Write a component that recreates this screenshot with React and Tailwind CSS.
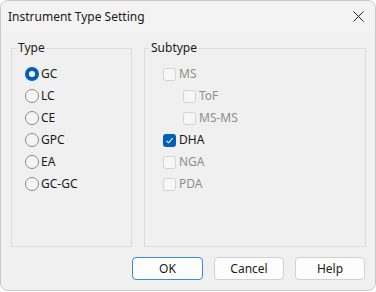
function Radio({ label, checked }) {
  return (
    <div className="flex items-center h-[22px] gap-[2px]">
      {checked ? (
        <span className="w-[14px] h-[14px] rounded-full bg-[#005fb8] flex items-center justify-center">
          <span className="w-[6px] h-[6px] rounded-full bg-white" />
        </span>
      ) : (
        <span className="w-[14px] h-[14px] rounded-full border border-[#8a8a8a] bg-[#f5f5f5]" />
      )}
      <span className="text-[12px] text-[#1a1a1a]">{label}</span>
    </div>
  );
}

function Check({ label, checked, disabled, indent }) {
  return (
    <div className={`flex items-center h-[22px] gap-[3px] ${indent ? "pl-[20px]" : ""}`}>
      {checked ? (
        <span className="w-[13px] h-[13px] rounded-[3px] bg-[#005fb8] flex items-center justify-center">
          <svg width="9" height="9" viewBox="0 0 9 9">
            <path d="M1.5 4.8 L3.6 6.8 L7.6 2.2" stroke="white" strokeWidth="1.1" fill="none" />
          </svg>
        </span>
      ) : (
        <span className="w-[13px] h-[13px] rounded-[3px] border border-[#d4d4d4] bg-[#f7f7f7]" />
      )}
      <span className={`text-[12px] ${disabled ? "text-[#8f8f8f]" : "text-[#1a1a1a]"}`}>{label}</span>
    </div>
  );
}

function Group({ title, className, children }) {
  return (
    <div className={`relative border border-[#dcdcdc] ${className}`}>
      <span className="absolute -top-[9px] left-[5px] bg-[#f0f0f0] px-[1px] text-[12px] leading-[16px] text-[#1a1a1a]">
        {title}
      </span>
      {children}
    </div>
  );
}

export default function App() {
  return (
    <div
      className="w-[376px] h-[292px] bg-white"
      style={{ fontFamily: '"Noto Sans", "Open Sans", sans-serif' }}
    >
      <div className="w-[376px] h-[291px] rounded-[8px] border border-[#c8c8c8] bg-[#f0f0f0] overflow-hidden flex flex-col">
        <div className="h-[31px] bg-[#f3f3f3] flex items-center justify-between pl-[7px] pr-[11px]">
          <span className="text-[12px] text-[#1a1a1a]">Instrument Type Setting</span>
          <svg width="11" height="11" viewBox="0 0 11 11">
            <path d="M0.5 0.5 L10.5 10.5 M10.5 0.5 L0.5 10.5" stroke="#222" strokeWidth="1" />
          </svg>
        </div>
        <div className="flex gap-[12px] pl-[10px] pt-[16px]">
          <Group title="Type" className="w-[121px] h-[199px] pl-[13px] pt-[14px]">
            <Radio label="GC" checked />
            <Radio label="LC" />
            <Radio label="CE" />
            <Radio label="GPC" />
            <Radio label="EA" />
            <Radio label="GC-GC" />
          </Group>
          <Group title="Subtype" className="w-[222px] h-[199px] pl-[18px] pt-[14px]">
            <Check label="MS" disabled />
            <Check label="ToF" disabled indent />
            <Check label="MS-MS" disabled indent />
            <Check label="DHA" checked />
            <Check label="NGA" disabled />
            <Check label="PDA" disabled />
          </Group>
        </div>
        <div className="flex justify-end gap-[11px] pr-[10px] pt-[10px]">
          <button className="w-[71px] h-[23px] rounded-[4px] border border-[#3d8ad6] bg-[#fdfdfd] text-[12px] text-[#1a1a1a]">
            OK
          </button>
          <button className="w-[70px] h-[23px] rounded-[4px] border border-[#d0d0d0] bg-[#fdfdfd] text-[12px] text-[#1a1a1a]">
            Cancel
          </button>
          <button className="w-[70px] h-[23px] rounded-[4px] border border-[#d0d0d0] bg-[#fdfdfd] text-[12px] text-[#1a1a1a]">
            Help
          </button>
        </div>
      </div>
    </div>
  );
}
